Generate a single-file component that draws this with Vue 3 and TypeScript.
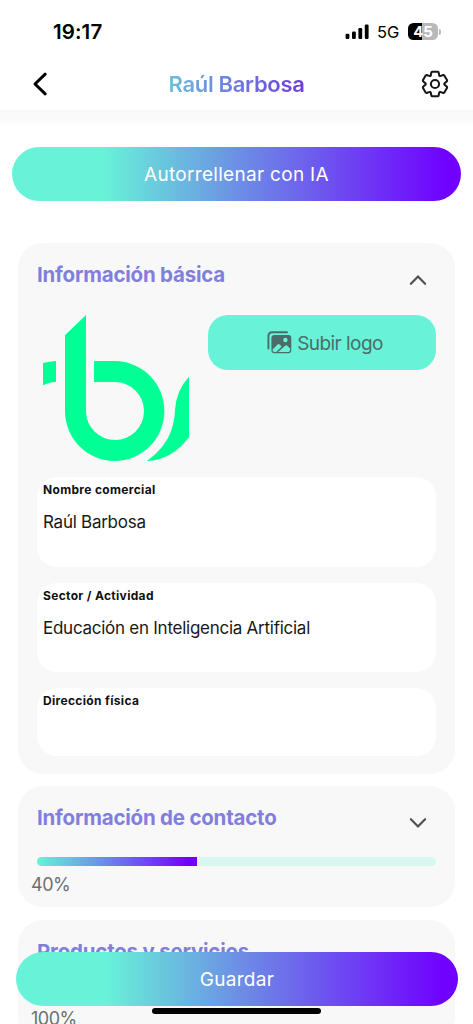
<script setup lang="ts">
interface Field {
  label: string
  value: string
}

interface Section {
  title: string
  percent: number
}

const fields: Field[] = [
  { label: 'Nombre comercial', value: 'Raúl Barbosa' },
  { label: 'Sector / Actividad', value: 'Educación en Inteligencia Artificial' },
  { label: 'Dirección física', value: '' },
]

const sections: Section[] = [
  { title: 'Información de contacto', percent: 40 },
  { title: 'Productos y servicios', percent: 100 },
]

// Outline of one gear tooth, repeated every 60 degrees around the centre.
const tooth: [number, number][] = [
  [-4.3, -8.3],
  [-3.6, -11.7],
  [-2.9, -12.3],
  [2.9, -12.3],
  [3.6, -11.7],
  [4.3, -8.3],
]
const gearPath =
  'M' +
  [0, 1, 2, 3, 4, 5]
    .flatMap((i) => {
      const a = (i * Math.PI) / 3
      return tooth.map(
        ([x, y]) =>
          `${(x * Math.cos(a) - y * Math.sin(a)).toFixed(2)} ${(x * Math.sin(a) + y * Math.cos(a)).toFixed(2)}`,
      )
    })
    .join('L') +
  'Z'
</script>

<template>
  <div class="screen">
    <div class="status">
      <span class="time">19:17</span>
      <div class="indicators">
        <svg class="signal" width="24" height="16" viewBox="0 0 24 16">
          <rect x="0.6" y="9.8" width="3.8" height="5.2" rx="1.2" />
          <rect x="7" y="7.4" width="3.8" height="7.6" rx="1.2" />
          <rect x="13.4" y="4" width="3.8" height="11" rx="1.2" />
          <rect x="19.8" y="0.5" width="3.8" height="14.5" rx="1.2" />
        </svg>
        <span class="network">5G</span>
        <div class="battery"><span>45</span></div>
        <i class="battery-tip"></i>
      </div>
    </div>

    <header class="nav">
      <svg class="back" width="16" height="26" viewBox="0 0 16 26">
        <path d="M13.2 3.2 3 13 13.2 22.8" />
      </svg>
      <h1>Raúl Barbosa</h1>
      <svg class="gear" width="28" height="28" viewBox="-14 -14 28 28">
        <path :d="gearPath" />
        <circle r="4.1" />
      </svg>
    </header>

    <main>
      <button class="pill autofill"><span>Autorrellenar con IA</span></button>

      <section class="card basic">
        <div class="card-head">
          <h2>Información básica</h2>
          <svg class="chevron" width="18" height="12" viewBox="0 0 18 12">
            <path d="M1.9 9.8 9 2.5l7.1 7.3" />
          </svg>
        </div>
        <div class="brand">
          <svg class="logo" width="146" height="146" viewBox="69 45 438 438">
            <path d="M135 106 198 45V334A87 87 0 1 0 285 246H222V183H285A149 150 0 1 1 135 334Z" />
            <path d="M69 189Q88 184 108 183V245Q88 246 69 256Z" />
            <path d="M507 230V412Q455 481 380 483C438 444 463 390 465 330Q469 270 507 230Z" />
          </svg>
          <button class="upload">
            <svg width="25" height="23" viewBox="0 0 25 23">
              <path class="frame" d="M1.4 17.5V5.2Q1.4 1.3 5.3 1.3H20" />
              <path
                class="fill"
                fill-rule="evenodd"
                d="M7.4 4H21.3Q24.3 4 24.3 7V19.2Q24.3 22.2 21.3 22.2H7.4Q4.4 22.2 4.4 19.2V7Q4.4 4 7.4 4ZM20.6 9A2.2 2.2 0 1 0 16.2 9A2.2 2.2 0 1 0 20.6 9ZM5.6 18.4V19.3Q5.6 21 7.3 21H9.2L14.7 15.5 12.6 13.4Q11.6 12.5 10.6 13.4ZM11 21H21.4Q23.1 21 23.1 19.2V17.4L20.4 14.8Q19.3 13.8 18.2 14.8Z"
              />
            </svg>
            <span>Subir logo</span>
          </button>
        </div>
        <div class="fields">
          <div v-for="f in fields" :key="f.label" class="field" :class="{ empty: !f.value }">
            <div class="label">{{ f.label }}</div>
            <div v-if="f.value" class="value">{{ f.value }}</div>
          </div>
        </div>
      </section>

      <section v-for="s in sections" :key="s.title" class="card progress-card">
        <div class="card-head">
          <h2>{{ s.title }}</h2>
          <svg class="chevron" width="18" height="12" viewBox="0 0 18 12">
            <path d="M1.9 2.2 9 9.5l7.1-7.3" />
          </svg>
        </div>
        <div class="track"><div class="bar" :style="{ width: s.percent + '%' }"></div></div>
        <div class="percent">{{ s.percent }}%</div>
      </section>
    </main>

    <button class="pill save"><span>Guardar</span></button>
    <div class="home-indicator"></div>
  </div>
</template>

<style>
html,
body {
  margin: 0;
  background: #fff;
}
</style>

<style scoped>
.screen {
  position: relative;
  width: 473px;
  height: 1024px;
  overflow: hidden;
  background: #fff;
  font-family: Inter, 'Liberation Sans', sans-serif;
  white-space: nowrap;
}
.screen * {
  box-sizing: border-box;
}
h1,
h2 {
  margin: 0;
}
button {
  border: 0;
  padding: 0;
  font-family: inherit;
}
.status {
  height: 58px;
  padding: 5px 32px 0 53px;
  display: flex;
  align-items: center;
  justify-content: space-between;
}
.time {
  font-size: 20.5px;
  font-weight: 600;
  letter-spacing: 0.1px;
}
.indicators {
  display: flex;
  align-items: center;
}
.network {
  width: 22px;
  margin: 0 9px 0 8px;
  font-size: 16.5px;
  font-weight: 400;
  letter-spacing: -0.1px;
}
.battery {
  width: 30px;
  height: 17px;
  border-radius: 5.5px;
  background: linear-gradient(90deg, #000 45%, #b9b9b9 45%);
  color: #fff;
  font-size: 15px;
  font-weight: 700;
  line-height: 17px;
  text-align: center;
}
.battery-tip {
  width: 2px;
  height: 6px;
  margin-left: 1px;
  border-radius: 0 2px 2px 0;
  background: #b9b9b9;
}
.nav {
  height: 52px;
  padding: 0 24px 0 32px;
  display: flex;
  align-items: center;
  justify-content: space-between;
}
.back,
.gear {
  fill: none;
  stroke: #000;
  stroke-width: 3;
  stroke-linecap: round;
  stroke-linejoin: round;
}
.gear {
  stroke: #151515;
  stroke-width: 2;
}
h1 {
  margin-left: 4px;
  font-size: 22px;
  font-weight: 600;
  line-height: 28px;
  letter-spacing: -0.3px;
  background: linear-gradient(90deg, #6cc0da, #6e80e2 45%, #6c3bdc);
  background-clip: text;
  color: transparent;
}
main {
  height: 914px;
  padding: 37px 12px 0;
  background: linear-gradient(#f9f9f9, #fafafa 9px, #fff 17px);
}
.pill {
  display: flex;
  align-items: center;
  justify-content: center;
  height: 54px;
  border-radius: 27px;
  background: linear-gradient(90deg, #68f3d8 20%, #6c90e5 50%, #7000ff 97%);
  color: #fff;
  font-size: 19px;
  letter-spacing: 0.3px;
}
.autofill {
  width: 449px;
}
.card {
  width: 437px;
  margin: 0 6px 12px;
  padding: 0 19px;
  border-radius: 25px;
  background: #f8f8f8;
}
.basic {
  height: 531px;
  margin-top: 42px;
}
.card-head {
  height: 72px;
  padding: 19px 9px 0 0;
  display: flex;
  justify-content: space-between;
}
h2 {
  color: #817fde;
  font-size: 20.5px;
  font-weight: 700;
  line-height: 26px;
  letter-spacing: -0.22px;
}
.chevron {
  margin-top: 12px;
  fill: none;
  stroke: #505050;
  stroke-width: 2.2;
  stroke-linecap: round;
}
.brand {
  height: 162px;
  padding-left: 6px;
  display: flex;
  align-items: flex-start;
  justify-content: space-between;
}
.logo {
  fill: #00ff94;
}
.upload {
  width: 228px;
  height: 55px;
  display: flex;
  align-items: center;
  justify-content: center;
  gap: 5px;
  padding: 0 0 0 6px;
  border-radius: 20px;
  background: #68f3d8;
  color: #4c6c69;
  font-size: 19px;
  letter-spacing: -0.55px;
}
.upload span {
  padding-top: 1px;
}
.upload .fill {
  fill: currentColor;
}
.upload .frame {
  fill: none;
  stroke: currentColor;
  stroke-width: 1.9;
  stroke-linecap: round;
}
.fields {
  display: flex;
  flex-direction: column;
  gap: 16px;
}
.field {
  height: 89.5px;
  padding: 5px 6px;
  border-radius: 20px;
  background: #fff;
}
.field.empty {
  height: 68px;
}
.label {
  color: #101010;
  font-size: 12px;
  font-weight: 700;
  line-height: 16px;
  letter-spacing: 0.33px;
}
.value {
  margin-top: 12px;
  color: #181818;
  font-size: 17px;
  line-height: 24px;
  letter-spacing: -0.26px;
}
.progress-card {
  height: 121px;
  margin-bottom: 13px;
}
.progress-card .card-head {
  height: 71px;
}
.track {
  height: 9px;
  border-radius: 5px;
  overflow: hidden;
  background: #d9f7f0;
}
.bar {
  height: 100%;
  background: linear-gradient(90deg, #68f3d8, #6c90e5 40%, #7000ff 95%);
}
.percent {
  margin: 7px 0 0 -6px;
  color: #6b7072;
  font-size: 18px;
  line-height: 24px;
  letter-spacing: -0.5px;
}
.save {
  position: absolute;
  left: 16px;
  top: 952px;
  width: 442px;
}
.home-indicator {
  position: absolute;
  left: 152px;
  top: 1008px;
  width: 169px;
  height: 6px;
  border-radius: 3px;
  background: #000;
}
</style>
